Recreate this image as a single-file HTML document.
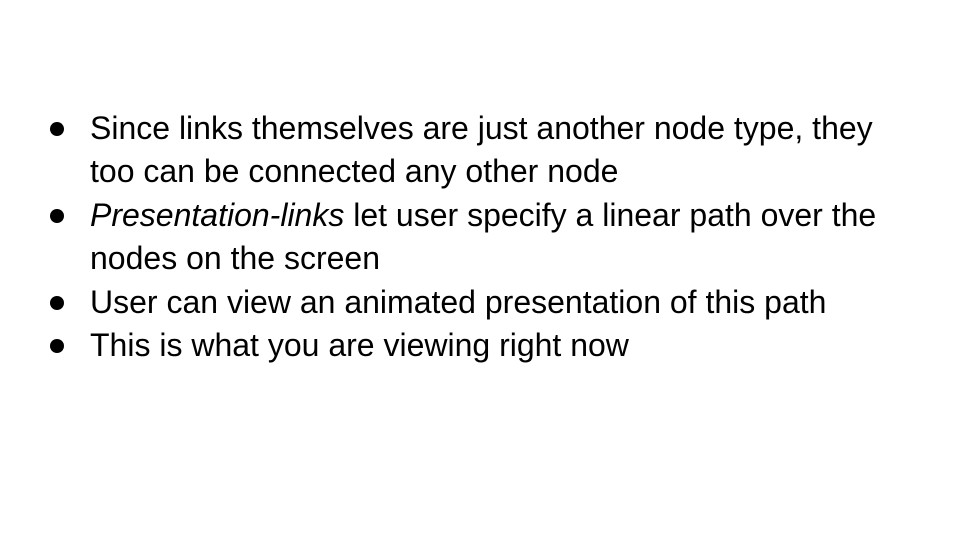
<!DOCTYPE html>
<html><head><style>
html,body{margin:0;padding:0;background:#fff;}
body{width:960px;height:540px;position:relative;overflow:hidden;font-family:"Liberation Sans",Arial,sans-serif;color:#000;}
ul{position:absolute;left:0;top:106.5px;margin:0;padding:0;list-style:none;font-size:32px;line-height:43.6px;white-space:nowrap;}
li{position:relative;padding-left:90px;}
li:before{content:"";position:absolute;left:50px;top:15px;width:14px;height:14px;border-radius:50%;background:#000;}
</style></head><body>
<ul>
<li>Since links themselves are just another node type, they<br>too can be connected any other node</li>
<li><i>Presentation-links</i> let user specify a linear path over the<br>nodes on the screen</li>
<li>User can view an animated presentation of this path</li>
<li>This is what you are viewing right now</li>
</ul>
</body></html>
